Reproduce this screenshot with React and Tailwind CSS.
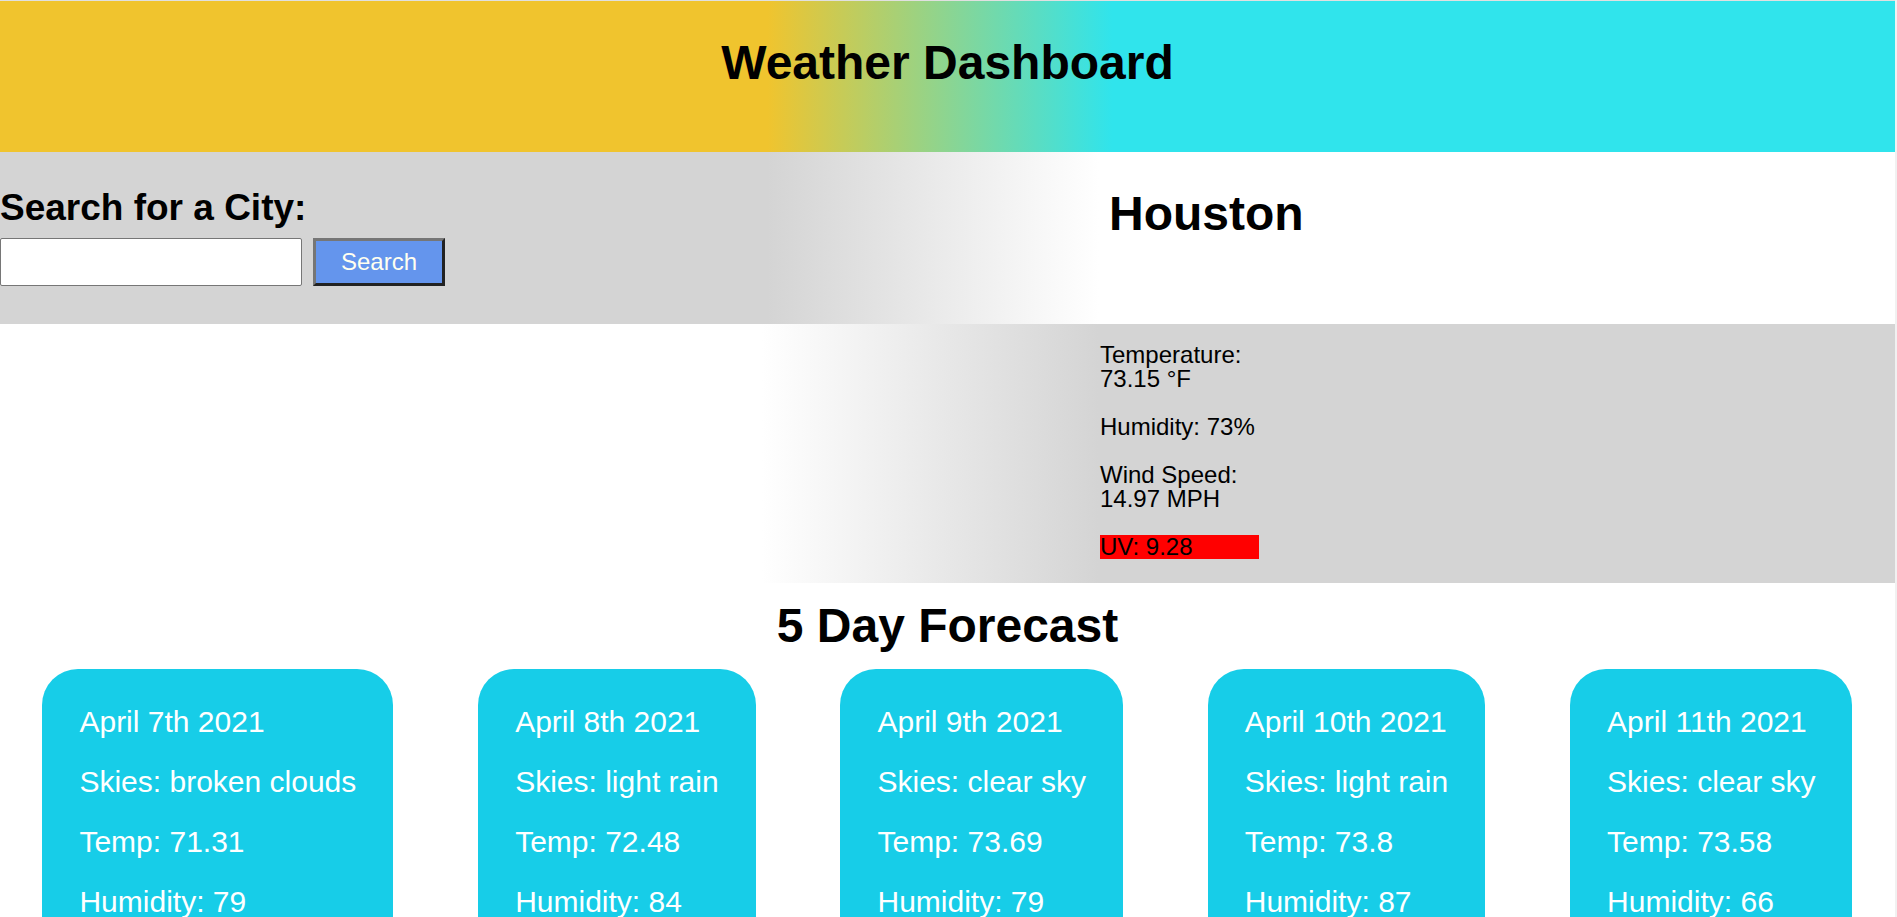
import React from 'react';

// Forecast data for the five day cards
const forecast = [
  { date: 'April 7th 2021', skies: 'broken clouds', temp: 71.31, humidity: 79 },
  { date: 'April 8th 2021', skies: 'light rain', temp: 72.48, humidity: 84 },
  { date: 'April 9th 2021', skies: 'clear sky', temp: 73.69, humidity: 79 },
  { date: 'April 10th 2021', skies: 'light rain', temp: 73.8, humidity: 87 },
  { date: 'April 11th 2021', skies: 'clear sky', temp: 73.58, humidity: 66 },
];

/**
 * Single forecast card
 */
const ForecastCard = ({ day }) => {
  return (
    <div className="bg-[#17cde8] rounded-[36px] px-[37px] pt-[38px] pb-[37px] text-white text-[30px] leading-[30px]">
      <div className="flex flex-col gap-[30px] whitespace-nowrap">
        <p>{day.date}</p>
        <p>Skies: {day.skies}</p>
        <p>Temp: {day.temp}</p>
        <p>Humidity: {day.humidity}</p>
      </div>
    </div>
  );
};

const App = () => {
  return (
    <div className="h-screen w-full overflow-hidden bg-white text-black border-r-2 border-[#f1f1f1] font-['Liberation_Sans',Arial,sans-serif]">
      {/* Header */}
      <header className="h-[152px] border-t border-[#e0e0e0] pt-[34px] bg-[linear-gradient(to_right,#f0c42e_40.5%,#30e4ec_58.7%)]">
        <h1 className="text-center text-[48px] font-bold leading-[55px]">Weather Dashboard</h1>
      </header>

      {/* Search + city name */}
      <section className="h-[172px] pt-[34px] grid grid-cols-[1100px_1fr] bg-[linear-gradient(to_right,#d4d4d4_40.5%,#ffffff_58%)]">
        <div>
          <h2 className="text-[37px] font-bold leading-[44px]">Search for a City:</h2>
          <form className="mt-[8px] flex items-center" onSubmit={(e) => e.preventDefault()}>
            <input
              type="text"
              className="w-[302px] h-[48px] bg-white border border-[#767676] rounded-[2px] px-2 text-[24px] outline-none"
            />
            <button
              type="submit"
              className="ml-[11px] w-[132px] h-[48px] bg-[#6495ed] text-[#fffff0] text-[24px] leading-none border-[3px] border-t-[#767676] border-l-[#767676] border-r-[#222222] border-b-[#222222]"
            >
              Search
            </button>
          </form>
        </div>
        <div>
          <h2 className="pl-[9px] text-[48px] font-bold leading-[55px]">Houston</h2>
        </div>
      </section>

      {/* Current conditions */}
      <section className="h-[259px] pt-[19px] grid grid-cols-[1100px_1fr] bg-[linear-gradient(to_right,#ffffff_40.2%,#d4d4d4_58%)]">
        <div />
        <div className="w-[159px] text-[24px] leading-[24px] flex flex-col gap-[24px]">
          <p>Temperature: 73.15 °F</p>
          <p>Humidity: 73%</p>
          <p>Wind Speed: 14.97 MPH</p>
          <div className="bg-[#ff0000]">UV: 9.28</div>
        </div>
      </section>

      {/* 5 day forecast */}
      <h2 className="mt-[15px] text-center text-[48px] font-bold leading-[55px]">5 Day Forecast</h2>
      <div className="mt-[16px] flex justify-around items-start">
        {forecast.map((day) => (
          <ForecastCard key={day.date} day={day} />
        ))}
      </div>
    </div>
  );
};

export default App;
